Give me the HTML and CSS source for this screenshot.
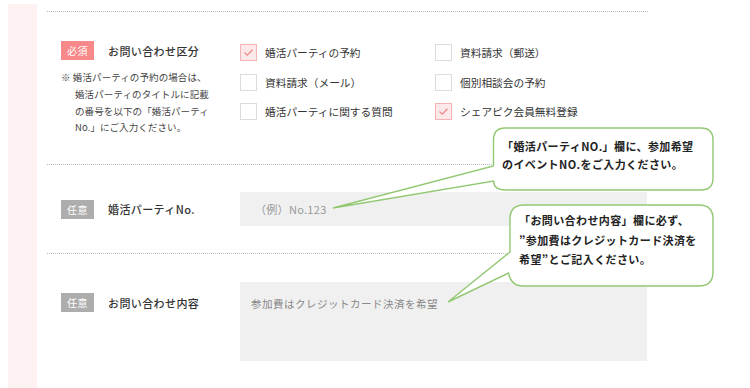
FILE: index.html
```html
<!DOCTYPE html>
<html lang="ja">
<head>
<meta charset="utf-8">
<link rel="stylesheet" href="styles.css">
</head>
<body>
<div class="page">
  <div class="side"></div>
  <div class="form">
    <div class="row row-kind">
      <div class="head">
        <div class="label-line">
          <span class="badge req">必須</span>
          <span class="label">お問い合わせ区分</span>
        </div>
        <p class="note">※ 婚活パーティの予約の場合は、<br>婚活パーティのタイトルに記載<br>の番号を以下の「婚活パーティ<br>No.」にご入力ください。</p>
      </div>
      <div class="checks">
        <div class="check on"><span class="box"><svg width="11" height="9" viewBox="0 0 11 9"><path d="M1.5 4.5 L4.3 7.2 L9.5 1.8" fill="none" stroke="#f08a8a" stroke-width="1.3"/></svg></span>婚活パーティの予約</div>
        <div class="check"><span class="box"></span>資料請求（郵送）</div>
        <div class="check"><span class="box"></span>資料請求（メール）</div>
        <div class="check"><span class="box"></span>個別相談会の予約</div>
        <div class="check"><span class="box"></span>婚活パーティに関する質問</div>
        <div class="check on"><span class="box"><svg width="11" height="9" viewBox="0 0 11 9"><path d="M1.5 4.5 L4.3 7.2 L9.5 1.8" fill="none" stroke="#f08a8a" stroke-width="1.3"/></svg></span>シェアピク会員無料登録</div>
      </div>
    </div>
    <div class="row row-no">
      <div class="head">
        <div class="label-line">
          <span class="badge opt">任意</span>
          <span class="label">婚活パーティNo.</span>
        </div>
      </div>
      <div class="input">（例）No.123</div>
    </div>
    <div class="row row-msg">
      <div class="head">
        <div class="label-line">
          <span class="badge opt">任意</span>
          <span class="label">お問い合わせ内容</span>
        </div>
      </div>
      <div class="textarea">参加費はクレジットカード決済を希望</div>
    </div>
  </div>
</div>

<div class="callout c1">
  <svg class="bubble" width="750" height="388" viewBox="0 0 750 388">
    <path d="M505 128 H701 Q713 128 713 140 V178 Q713 190 701 190 H505 Q494 190 493.5 181 L333 208 L493.5 166 V140 Q493.5 128 505 128 Z" fill="#fff" stroke="#93c873" stroke-width="1.4"/>
    <path d="M524 205 H699 Q713 205 713 219 V272 Q713 286 699 286 H523 Q511 286 508.5 273 L448 302 L510 252 V219 Q510 205 524 205 Z" fill="#fff" stroke="#93c873" stroke-width="1.4"/>
  </svg>
  <div class="ctext t1">「婚活パーティNO.」欄に、参加希望<br>のイベントNO.をご入力ください。</div>
  <div class="ctext t2">「お問い合わせ内容」欄に必ず、<br>”参加費はクレジットカード決済を<br>希望”とご記入ください。</div>
</div>
</body>
</html>
```
FILE: styles.css
```css
html, body {
  margin: 0;
  padding: 0;
  background: #fff;
}
body {
  width: 750px;
  height: 388px;
  overflow: hidden;
  position: relative;
  font-family: "Noto Sans CJK JP", "Noto Sans", sans-serif;
  color: #333;
}
.page {
  display: flex;
  padding-top: 4px;
  height: 384px;
}
.side {
  width: 29px;
  margin-left: 8px;
  background: #fdf1f1;
  flex: none;
}
.form {
  width: 601px;
  margin-left: 10px;
  padding-top: 7px;
}
.row {
  border-top: 1px dotted #b8b8b8;
  display: flex;
}
.head {
  width: 179px;
  padding-left: 14px;
  flex: none;
}
.label-line {
  display: flex;
  align-items: center;
}
.badge {
  width: 33px;
  height: 19px;
  display: inline-flex;
  align-items: center;
  justify-content: center;
  color: #fff;
  font-size: 10px;
  letter-spacing: 0.5px;
  flex: none;
}
.req { background: #f7898a; }
.opt { background: #adadad; }
.label {
  margin-left: 14px;
  font-size: 11px;
  letter-spacing: 0.4px;
  color: #333;
  font-weight: 500;
}
.note {
  margin: 9px 0 0;
  font-size: 9.5px;
  line-height: 16.8px;
  color: #444;
  padding-left: 14px;
  text-indent: -14px;
  letter-spacing: 0.1px;
}
.row-kind {
  padding: 29px 0 28px;
}
.checks {
  display: grid;
  grid-template-columns: 195px 190px;
  grid-auto-rows: 17px;
  row-gap: 12.5px;
  align-self: flex-start;
  align-content: start;
  padding-top: 3px;
}
.check {
  display: flex;
  align-items: center;
  font-size: 10.7px;
  color: #333;
  height: 17px;
}
.box {
  width: 15px;
  height: 15px;
  border: 1px solid #dcdcdc;
  background: #fff;
  margin-right: 8px;
  display: inline-flex;
  align-items: center;
  justify-content: center;
  flex: none;
}
.check.on .box {
  border-color: #f6b3b3;
  background: #fde9e9;
}
.row-no {
  padding: 27px 0 27px;
  align-items: center;
}
.input {
  width: 392px;
  height: 34px;
  background: #f0f0f0;
  padding-left: 15px;
  display: flex;
  align-items: center;
  font-size: 11px;
  color: #999;
  letter-spacing: 0.3px;
}
.row-msg {
  padding-top: 28px;
}
.row-msg .head {
  padding-top: 11px;
}
.textarea {
  height: 79px;
  background: #f0f0f0;
  padding: 14px 0 0 11px;
  box-sizing: border-box;
  width: 407px;
  font-size: 10.5px;
  color: #888;
  letter-spacing: 0.5px;
}
.callout {
  position: absolute;
  left: 0;
  top: 0;
  width: 750px;
  height: 388px;
}
.bubble {
  position: absolute;
  left: 0;
  top: 0;
}
.ctext {
  position: absolute;
  font-weight: 700;
  font-size: 11px;
  color: #222;
  letter-spacing: 0.4px;
}
.t1 {
  left: 502px;
  top: 137px;
  line-height: 18px;
}
.t2 {
  left: 519px;
  top: 211px;
  line-height: 19.5px;
}
```
